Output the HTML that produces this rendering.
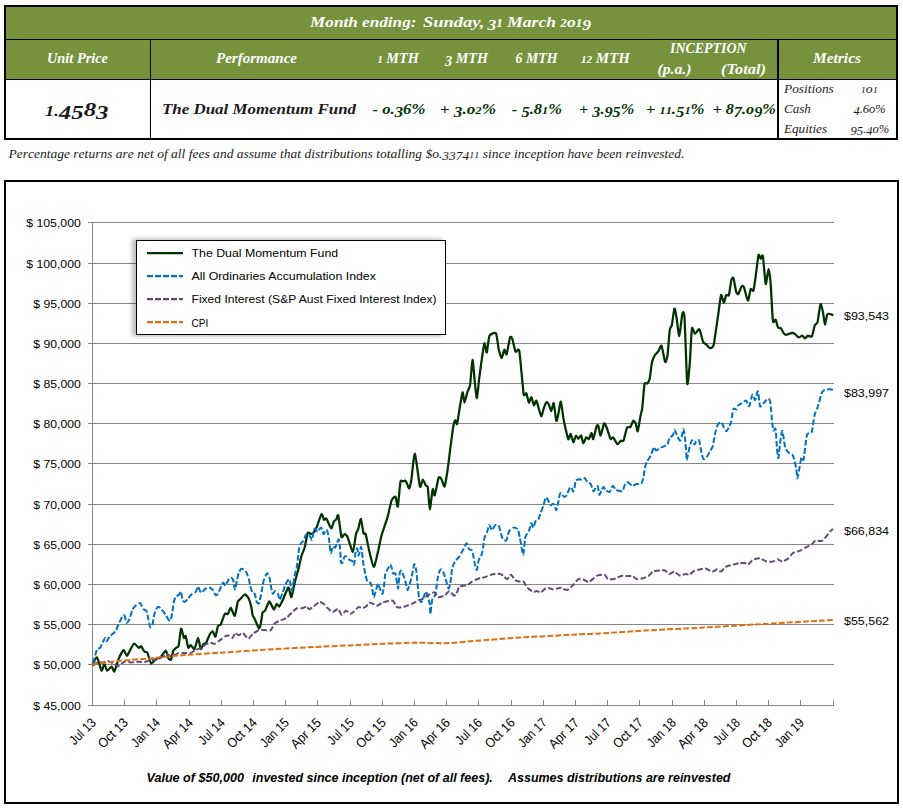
<!DOCTYPE html><html><head><meta charset="utf-8"><title>Fund</title><style>html,body{margin:0;padding:0;background:#fff;width:903px;height:808px;overflow:hidden;position:relative;font-family:"Liberation Sans",sans-serif}</style></head><body><svg width="903" height="808" viewBox="0 0 903 808" style="position:absolute;left:0;top:0">
<rect x="0" y="0" width="903" height="808" fill="#fff"/>
<rect x="4" y="5" width="894" height="135" fill="#000"/>
<rect x="6" y="7" width="890" height="32" fill="#76923c"/>
<rect x="6" y="40" width="144" height="39" fill="#76923c"/>
<rect x="151" y="40" width="626" height="39" fill="#76923c"/>
<rect x="779" y="40" width="117" height="39" fill="#76923c"/>
<rect x="6" y="80" width="144" height="58" fill="#fff"/>
<rect x="151" y="80" width="626" height="58" fill="#fff"/>
<rect x="779" y="80" width="117" height="58" fill="#fff"/>
<text x="310" y="27" font-family="'Liberation Serif', serif" font-size="15.5" font-weight="bold" font-style="italic" fill="#fff" text-anchor="start" textLength="106.5" lengthAdjust="spacingAndGlyphs" >Month ending:</text>
<text x="423" y="27" font-family="'Liberation Serif', serif" font-size="15.5" font-weight="bold" font-style="italic" fill="#fff" text-anchor="start" textLength="61.5" lengthAdjust="spacingAndGlyphs" >Sunday,</text>
<text x="487.5" y="27" font-family="'Liberation Serif', serif" font-size="15.5" font-weight="bold" font-style="italic" fill="#fff" textLength="103.5" lengthAdjust="spacingAndGlyphs" xml:space="preserve"><tspan y="30.1" font-size="15.5">3</tspan><tspan y="27" font-size="11.62">1</tspan><tspan y="27" font-size="15.5"> </tspan><tspan y="27" font-size="15.5">M</tspan><tspan y="27" font-size="15.5">a</tspan><tspan y="27" font-size="15.5">r</tspan><tspan y="27" font-size="15.5">c</tspan><tspan y="27" font-size="15.5">h</tspan><tspan y="27" font-size="15.5"> </tspan><tspan y="27" font-size="11.62">2</tspan><tspan y="27" font-size="15.5">o</tspan><tspan y="27" font-size="11.62">1</tspan><tspan y="30.1" font-size="15.5">9</tspan></text>
<text x="47" y="63" font-family="'Liberation Serif', serif" font-size="14" font-weight="bold" font-style="italic" fill="#fff" text-anchor="start" textLength="61" lengthAdjust="spacingAndGlyphs" >Unit Price</text>
<text x="216" y="63" font-family="'Liberation Serif', serif" font-size="14" font-weight="bold" font-style="italic" fill="#fff" text-anchor="start" textLength="81" lengthAdjust="spacingAndGlyphs" >Performance</text>
<text x="377.5" y="63" font-family="'Liberation Serif', serif" font-size="14" font-weight="bold" font-style="italic" fill="#fff" textLength="41.5" lengthAdjust="spacingAndGlyphs" xml:space="preserve"><tspan y="63" font-size="10.36">1</tspan><tspan y="63" font-size="14"> </tspan><tspan y="63" font-size="14">M</tspan><tspan y="63" font-size="14">T</tspan><tspan y="63" font-size="14">H</tspan></text>
<text x="445" y="63" font-family="'Liberation Serif', serif" font-size="14" font-weight="bold" font-style="italic" fill="#fff" textLength="43" lengthAdjust="spacingAndGlyphs" xml:space="preserve"><tspan y="65.8" font-size="14">3</tspan><tspan y="63" font-size="14"> </tspan><tspan y="63" font-size="14">M</tspan><tspan y="63" font-size="14">T</tspan><tspan y="63" font-size="14">H</tspan></text>
<text x="515.5" y="63" font-family="'Liberation Serif', serif" font-size="14" font-weight="bold" font-style="italic" fill="#fff" textLength="42" lengthAdjust="spacingAndGlyphs" xml:space="preserve"><tspan y="63" font-size="14">6</tspan><tspan y="63" font-size="14"> </tspan><tspan y="63" font-size="14">M</tspan><tspan y="63" font-size="14">T</tspan><tspan y="63" font-size="14">H</tspan></text>
<text x="581" y="63" font-family="'Liberation Serif', serif" font-size="14" font-weight="bold" font-style="italic" fill="#fff" textLength="49" lengthAdjust="spacingAndGlyphs" xml:space="preserve"><tspan y="63" font-size="10.36">1</tspan><tspan y="63" font-size="10.36">2</tspan><tspan y="63" font-size="14"> </tspan><tspan y="63" font-size="14">M</tspan><tspan y="63" font-size="14">T</tspan><tspan y="63" font-size="14">H</tspan></text>
<text x="670" y="53" font-family="'Liberation Serif', serif" font-size="14" font-weight="bold" font-style="italic" fill="#fff" text-anchor="start" textLength="76.5" lengthAdjust="spacingAndGlyphs" >INCEPTION</text>
<text x="657.5" y="74" font-family="'Liberation Serif', serif" font-size="14" font-weight="bold" font-style="italic" fill="#fff" text-anchor="start" textLength="34" lengthAdjust="spacingAndGlyphs" >(p.a.)</text>
<text x="721" y="74" font-family="'Liberation Serif', serif" font-size="14" font-weight="bold" font-style="italic" fill="#fff" text-anchor="start" textLength="45" lengthAdjust="spacingAndGlyphs" >(Total)</text>
<text x="813" y="63" font-family="'Liberation Serif', serif" font-size="14" font-weight="bold" font-style="italic" fill="#fff" text-anchor="start" textLength="48" lengthAdjust="spacingAndGlyphs" >Metrics</text>
<text x="45" y="116" font-family="'Liberation Serif', serif" font-size="19.5" font-weight="bold" font-style="italic" fill="#1a1a1a" textLength="63.5" lengthAdjust="spacingAndGlyphs"><tspan font-size="14.5">1.</tspan><tspan y="119">45</tspan><tspan y="116">8</tspan><tspan y="119">3</tspan></text>
<text x="162" y="114" font-family="'Liberation Serif', serif" font-size="14.5" font-weight="bold" font-style="italic" fill="#1a1a1a" text-anchor="start" textLength="194" lengthAdjust="spacingAndGlyphs" >The Dual Momentum Fund</text>
<text x="372.4" y="113.7" font-family="'Liberation Serif', serif" font-size="14.5" font-weight="bold" font-style="italic" fill="#003300" textLength="53.0" lengthAdjust="spacingAndGlyphs" xml:space="preserve"><tspan y="113.7" font-size="14.5">-</tspan><tspan y="113.7" font-size="14.5"> </tspan><tspan y="113.7" font-size="14.5">o</tspan><tspan y="113.7" font-size="14.5">.</tspan><tspan y="116.6" font-size="14.5">3</tspan><tspan y="113.7" font-size="14.5">6</tspan><tspan y="113.7" font-size="14.5">%</tspan></text>
<text x="439.7" y="113.7" font-family="'Liberation Serif', serif" font-size="14.5" font-weight="bold" font-style="italic" fill="#003300" textLength="56.3" lengthAdjust="spacingAndGlyphs" xml:space="preserve"><tspan y="113.7" font-size="14.5">+</tspan><tspan y="113.7" font-size="14.5"> </tspan><tspan y="116.6" font-size="14.5">3</tspan><tspan y="113.7" font-size="14.5">.</tspan><tspan y="113.7" font-size="14.5">o</tspan><tspan y="113.7" font-size="10.73">2</tspan><tspan y="113.7" font-size="14.5">%</tspan></text>
<text x="511.8" y="113.7" font-family="'Liberation Serif', serif" font-size="14.5" font-weight="bold" font-style="italic" fill="#003300" textLength="50.2" lengthAdjust="spacingAndGlyphs" xml:space="preserve"><tspan y="113.7" font-size="14.5">-</tspan><tspan y="113.7" font-size="14.5"> </tspan><tspan y="116.6" font-size="14.5">5</tspan><tspan y="113.7" font-size="14.5">.</tspan><tspan y="113.7" font-size="14.5">8</tspan><tspan y="113.7" font-size="10.73">1</tspan><tspan y="113.7" font-size="14.5">%</tspan></text>
<text x="579" y="113.7" font-family="'Liberation Serif', serif" font-size="14.5" font-weight="bold" font-style="italic" fill="#003300" textLength="55.2" lengthAdjust="spacingAndGlyphs" xml:space="preserve"><tspan y="113.7" font-size="14.5">+</tspan><tspan y="113.7" font-size="14.5"> </tspan><tspan y="116.6" font-size="14.5">3</tspan><tspan y="113.7" font-size="14.5">.</tspan><tspan y="116.6" font-size="14.5">9</tspan><tspan y="116.6" font-size="14.5">5</tspan><tspan y="113.7" font-size="14.5">%</tspan></text>
<text x="645.7" y="113.7" font-family="'Liberation Serif', serif" font-size="14.5" font-weight="bold" font-style="italic" fill="#003300" textLength="58.9" lengthAdjust="spacingAndGlyphs" xml:space="preserve"><tspan y="113.7" font-size="14.5">+</tspan><tspan y="113.7" font-size="14.5"> </tspan><tspan y="113.7" font-size="10.73">1</tspan><tspan y="113.7" font-size="10.73">1</tspan><tspan y="113.7" font-size="14.5">.</tspan><tspan y="116.6" font-size="14.5">5</tspan><tspan y="113.7" font-size="10.73">1</tspan><tspan y="113.7" font-size="14.5">%</tspan></text>
<text x="712.4" y="113.7" font-family="'Liberation Serif', serif" font-size="14.5" font-weight="bold" font-style="italic" fill="#003300" textLength="63.5" lengthAdjust="spacingAndGlyphs" xml:space="preserve"><tspan y="113.7" font-size="14.5">+</tspan><tspan y="113.7" font-size="14.5"> </tspan><tspan y="113.7" font-size="14.5">8</tspan><tspan y="116.6" font-size="14.5">7</tspan><tspan y="113.7" font-size="14.5">.</tspan><tspan y="113.7" font-size="14.5">o</tspan><tspan y="116.6" font-size="14.5">9</tspan><tspan y="113.7" font-size="14.5">%</tspan></text>
<text x="784" y="92.6" font-family="'Liberation Serif', serif" font-size="12" font-weight="normal" font-style="italic" fill="#1a1a1a" text-anchor="start" textLength="49.8" lengthAdjust="spacingAndGlyphs" >Positions</text>
<text x="860.8" y="92.6" font-family="'Liberation Serif', serif" font-size="12" font-weight="normal" font-style="italic" fill="#1a1a1a" textLength="17" lengthAdjust="spacingAndGlyphs" xml:space="preserve"><tspan y="92.6" font-size="8.88">1</tspan><tspan y="92.6" font-size="12">o</tspan><tspan y="92.6" font-size="8.88">1</tspan></text>
<text x="784" y="112.5" font-family="'Liberation Serif', serif" font-size="12" font-weight="normal" font-style="italic" fill="#1a1a1a" text-anchor="start" textLength="26.8" lengthAdjust="spacingAndGlyphs" >Cash</text>
<text x="853.5" y="112.5" font-family="'Liberation Serif', serif" font-size="12" font-weight="normal" font-style="italic" fill="#1a1a1a" textLength="32.2" lengthAdjust="spacingAndGlyphs" xml:space="preserve"><tspan y="114.9" font-size="12">4</tspan><tspan y="112.5" font-size="12">.</tspan><tspan y="112.5" font-size="12">6</tspan><tspan y="112.5" font-size="12">o</tspan><tspan y="112.5" font-size="12">%</tspan></text>
<text x="784" y="132.7" font-family="'Liberation Serif', serif" font-size="12" font-weight="normal" font-style="italic" fill="#1a1a1a" text-anchor="start" textLength="43" lengthAdjust="spacingAndGlyphs" >Equities</text>
<text x="850.5" y="132.7" font-family="'Liberation Serif', serif" font-size="12" font-weight="normal" font-style="italic" fill="#1a1a1a" textLength="38.8" lengthAdjust="spacingAndGlyphs" xml:space="preserve"><tspan y="135.1" font-size="12">9</tspan><tspan y="135.1" font-size="12">5</tspan><tspan y="132.7" font-size="12">.</tspan><tspan y="135.1" font-size="12">4</tspan><tspan y="132.7" font-size="12">o</tspan><tspan y="132.7" font-size="12">%</tspan></text>
<text x="8.4" y="157.7" font-family="'Liberation Serif', serif" font-size="11.5" font-weight="normal" font-style="italic" fill="#1a1a1a" textLength="676" lengthAdjust="spacingAndGlyphs" xml:space="preserve"><tspan y="157.7" font-size="11.5">P</tspan><tspan y="157.7" font-size="11.5">e</tspan><tspan y="157.7" font-size="11.5">r</tspan><tspan y="157.7" font-size="11.5">c</tspan><tspan y="157.7" font-size="11.5">e</tspan><tspan y="157.7" font-size="11.5">n</tspan><tspan y="157.7" font-size="11.5">t</tspan><tspan y="157.7" font-size="11.5">a</tspan><tspan y="157.7" font-size="11.5">g</tspan><tspan y="157.7" font-size="11.5">e</tspan><tspan y="157.7" font-size="11.5"> </tspan><tspan y="157.7" font-size="11.5">r</tspan><tspan y="157.7" font-size="11.5">e</tspan><tspan y="157.7" font-size="11.5">t</tspan><tspan y="157.7" font-size="11.5">u</tspan><tspan y="157.7" font-size="11.5">r</tspan><tspan y="157.7" font-size="11.5">n</tspan><tspan y="157.7" font-size="11.5">s</tspan><tspan y="157.7" font-size="11.5"> </tspan><tspan y="157.7" font-size="11.5">a</tspan><tspan y="157.7" font-size="11.5">r</tspan><tspan y="157.7" font-size="11.5">e</tspan><tspan y="157.7" font-size="11.5"> </tspan><tspan y="157.7" font-size="11.5">n</tspan><tspan y="157.7" font-size="11.5">e</tspan><tspan y="157.7" font-size="11.5">t</tspan><tspan y="157.7" font-size="11.5"> </tspan><tspan y="157.7" font-size="11.5">o</tspan><tspan y="157.7" font-size="11.5">f</tspan><tspan y="157.7" font-size="11.5"> </tspan><tspan y="157.7" font-size="11.5">a</tspan><tspan y="157.7" font-size="11.5">l</tspan><tspan y="157.7" font-size="11.5">l</tspan><tspan y="157.7" font-size="11.5"> </tspan><tspan y="157.7" font-size="11.5">f</tspan><tspan y="157.7" font-size="11.5">e</tspan><tspan y="157.7" font-size="11.5">e</tspan><tspan y="157.7" font-size="11.5">s</tspan><tspan y="157.7" font-size="11.5"> </tspan><tspan y="157.7" font-size="11.5">a</tspan><tspan y="157.7" font-size="11.5">n</tspan><tspan y="157.7" font-size="11.5">d</tspan><tspan y="157.7" font-size="11.5"> </tspan><tspan y="157.7" font-size="11.5">a</tspan><tspan y="157.7" font-size="11.5">s</tspan><tspan y="157.7" font-size="11.5">s</tspan><tspan y="157.7" font-size="11.5">u</tspan><tspan y="157.7" font-size="11.5">m</tspan><tspan y="157.7" font-size="11.5">e</tspan><tspan y="157.7" font-size="11.5"> </tspan><tspan y="157.7" font-size="11.5">t</tspan><tspan y="157.7" font-size="11.5">h</tspan><tspan y="157.7" font-size="11.5">a</tspan><tspan y="157.7" font-size="11.5">t</tspan><tspan y="157.7" font-size="11.5"> </tspan><tspan y="157.7" font-size="11.5">d</tspan><tspan y="157.7" font-size="11.5">i</tspan><tspan y="157.7" font-size="11.5">s</tspan><tspan y="157.7" font-size="11.5">t</tspan><tspan y="157.7" font-size="11.5">r</tspan><tspan y="157.7" font-size="11.5">i</tspan><tspan y="157.7" font-size="11.5">b</tspan><tspan y="157.7" font-size="11.5">u</tspan><tspan y="157.7" font-size="11.5">t</tspan><tspan y="157.7" font-size="11.5">i</tspan><tspan y="157.7" font-size="11.5">o</tspan><tspan y="157.7" font-size="11.5">n</tspan><tspan y="157.7" font-size="11.5">s</tspan><tspan y="157.7" font-size="11.5"> </tspan><tspan y="157.7" font-size="11.5">t</tspan><tspan y="157.7" font-size="11.5">o</tspan><tspan y="157.7" font-size="11.5">t</tspan><tspan y="157.7" font-size="11.5">a</tspan><tspan y="157.7" font-size="11.5">l</tspan><tspan y="157.7" font-size="11.5">l</tspan><tspan y="157.7" font-size="11.5">i</tspan><tspan y="157.7" font-size="11.5">n</tspan><tspan y="157.7" font-size="11.5">g</tspan><tspan y="157.7" font-size="11.5"> </tspan><tspan y="157.7" font-size="11.5">$</tspan><tspan y="157.7" font-size="11.5">o</tspan><tspan y="157.7" font-size="11.5">.</tspan><tspan y="160.0" font-size="11.5">3</tspan><tspan y="160.0" font-size="11.5">3</tspan><tspan y="160.0" font-size="11.5">7</tspan><tspan y="160.0" font-size="11.5">4</tspan><tspan y="157.7" font-size="8.51">1</tspan><tspan y="157.7" font-size="8.51">1</tspan><tspan y="157.7" font-size="11.5"> </tspan><tspan y="157.7" font-size="11.5">s</tspan><tspan y="157.7" font-size="11.5">i</tspan><tspan y="157.7" font-size="11.5">n</tspan><tspan y="157.7" font-size="11.5">c</tspan><tspan y="157.7" font-size="11.5">e</tspan><tspan y="157.7" font-size="11.5"> </tspan><tspan y="157.7" font-size="11.5">i</tspan><tspan y="157.7" font-size="11.5">n</tspan><tspan y="157.7" font-size="11.5">c</tspan><tspan y="157.7" font-size="11.5">e</tspan><tspan y="157.7" font-size="11.5">p</tspan><tspan y="157.7" font-size="11.5">t</tspan><tspan y="157.7" font-size="11.5">i</tspan><tspan y="157.7" font-size="11.5">o</tspan><tspan y="157.7" font-size="11.5">n</tspan><tspan y="157.7" font-size="11.5"> </tspan><tspan y="157.7" font-size="11.5">h</tspan><tspan y="157.7" font-size="11.5">a</tspan><tspan y="157.7" font-size="11.5">v</tspan><tspan y="157.7" font-size="11.5">e</tspan><tspan y="157.7" font-size="11.5"> </tspan><tspan y="157.7" font-size="11.5">b</tspan><tspan y="157.7" font-size="11.5">e</tspan><tspan y="157.7" font-size="11.5">e</tspan><tspan y="157.7" font-size="11.5">n</tspan><tspan y="157.7" font-size="11.5"> </tspan><tspan y="157.7" font-size="11.5">r</tspan><tspan y="157.7" font-size="11.5">e</tspan><tspan y="157.7" font-size="11.5">i</tspan><tspan y="157.7" font-size="11.5">n</tspan><tspan y="157.7" font-size="11.5">v</tspan><tspan y="157.7" font-size="11.5">e</tspan><tspan y="157.7" font-size="11.5">s</tspan><tspan y="157.7" font-size="11.5">t</tspan><tspan y="157.7" font-size="11.5">e</tspan><tspan y="157.7" font-size="11.5">d</tspan><tspan y="157.7" font-size="11.5">.</tspan></text>
<rect x="4" y="180" width="895" height="624" fill="#000"/>
<rect x="6" y="182" width="891" height="620" fill="#fff"/>
<rect x="92" y="222" width="742" height="1" fill="#868686"/>
<rect x="88" y="222" width="4" height="1" fill="#868686"/>
<text x="80.8" y="226.5" font-family="'Liberation Sans', sans-serif" font-size="11" font-weight="normal" font-style="normal" fill="#000" text-anchor="end" textLength="54.599999999999994" lengthAdjust="spacingAndGlyphs" >$ 105,000</text>
<rect x="92" y="263" width="742" height="1" fill="#868686"/>
<rect x="88" y="263" width="4" height="1" fill="#868686"/>
<text x="80.8" y="267.5" font-family="'Liberation Sans', sans-serif" font-size="11" font-weight="normal" font-style="normal" fill="#000" text-anchor="end" textLength="54.599999999999994" lengthAdjust="spacingAndGlyphs" >$ 100,000</text>
<rect x="92" y="303" width="742" height="1" fill="#868686"/>
<rect x="88" y="303" width="4" height="1" fill="#868686"/>
<text x="80.8" y="307.5" font-family="'Liberation Sans', sans-serif" font-size="11" font-weight="normal" font-style="normal" fill="#000" text-anchor="end" textLength="47.599999999999994" lengthAdjust="spacingAndGlyphs" >$ 95,000</text>
<rect x="92" y="343" width="742" height="1" fill="#868686"/>
<rect x="88" y="343" width="4" height="1" fill="#868686"/>
<text x="80.8" y="347.5" font-family="'Liberation Sans', sans-serif" font-size="11" font-weight="normal" font-style="normal" fill="#000" text-anchor="end" textLength="47.599999999999994" lengthAdjust="spacingAndGlyphs" >$ 90,000</text>
<rect x="92" y="383" width="742" height="1" fill="#868686"/>
<rect x="88" y="383" width="4" height="1" fill="#868686"/>
<text x="80.8" y="387.5" font-family="'Liberation Sans', sans-serif" font-size="11" font-weight="normal" font-style="normal" fill="#000" text-anchor="end" textLength="47.599999999999994" lengthAdjust="spacingAndGlyphs" >$ 85,000</text>
<rect x="92" y="423" width="742" height="1" fill="#868686"/>
<rect x="88" y="423" width="4" height="1" fill="#868686"/>
<text x="80.8" y="427.5" font-family="'Liberation Sans', sans-serif" font-size="11" font-weight="normal" font-style="normal" fill="#000" text-anchor="end" textLength="47.599999999999994" lengthAdjust="spacingAndGlyphs" >$ 80,000</text>
<rect x="92" y="463" width="742" height="1" fill="#868686"/>
<rect x="88" y="463" width="4" height="1" fill="#868686"/>
<text x="80.8" y="467.5" font-family="'Liberation Sans', sans-serif" font-size="11" font-weight="normal" font-style="normal" fill="#000" text-anchor="end" textLength="47.599999999999994" lengthAdjust="spacingAndGlyphs" >$ 75,000</text>
<rect x="92" y="504" width="742" height="1" fill="#868686"/>
<rect x="88" y="504" width="4" height="1" fill="#868686"/>
<text x="80.8" y="508.5" font-family="'Liberation Sans', sans-serif" font-size="11" font-weight="normal" font-style="normal" fill="#000" text-anchor="end" textLength="47.599999999999994" lengthAdjust="spacingAndGlyphs" >$ 70,000</text>
<rect x="92" y="544" width="742" height="1" fill="#868686"/>
<rect x="88" y="544" width="4" height="1" fill="#868686"/>
<text x="80.8" y="548.5" font-family="'Liberation Sans', sans-serif" font-size="11" font-weight="normal" font-style="normal" fill="#000" text-anchor="end" textLength="47.599999999999994" lengthAdjust="spacingAndGlyphs" >$ 65,000</text>
<rect x="92" y="584" width="742" height="1" fill="#868686"/>
<rect x="88" y="584" width="4" height="1" fill="#868686"/>
<text x="80.8" y="588.5" font-family="'Liberation Sans', sans-serif" font-size="11" font-weight="normal" font-style="normal" fill="#000" text-anchor="end" textLength="47.599999999999994" lengthAdjust="spacingAndGlyphs" >$ 60,000</text>
<rect x="92" y="624" width="742" height="1" fill="#868686"/>
<rect x="88" y="624" width="4" height="1" fill="#868686"/>
<text x="80.8" y="628.5" font-family="'Liberation Sans', sans-serif" font-size="11" font-weight="normal" font-style="normal" fill="#000" text-anchor="end" textLength="47.599999999999994" lengthAdjust="spacingAndGlyphs" >$ 55,000</text>
<rect x="92" y="664" width="742" height="1" fill="#868686"/>
<rect x="88" y="664" width="4" height="1" fill="#868686"/>
<text x="80.8" y="668.5" font-family="'Liberation Sans', sans-serif" font-size="11" font-weight="normal" font-style="normal" fill="#000" text-anchor="end" textLength="47.599999999999994" lengthAdjust="spacingAndGlyphs" >$ 50,000</text>
<rect x="88" y="705" width="4" height="1" fill="#868686"/>
<text x="80.8" y="709.5" font-family="'Liberation Sans', sans-serif" font-size="11" font-weight="normal" font-style="normal" fill="#000" text-anchor="end" textLength="47.599999999999994" lengthAdjust="spacingAndGlyphs" >$ 45,000</text>
<rect x="92" y="222" width="1" height="484" fill="#868686"/>
<rect x="88" y="705" width="746" height="1" fill="#868686"/>
<rect x="92" y="700" width="1" height="5" fill="#868686"/>
<text x="96.8" y="723.5" font-family="'Liberation Sans', sans-serif" font-size="13.3" fill="#000" text-anchor="end" textLength="31.46" lengthAdjust="spacingAndGlyphs" transform="rotate(-45 96.8 723.5)">Jul 13</text>
<rect x="124" y="700" width="1" height="5" fill="#868686"/>
<text x="128.8" y="723.5" font-family="'Liberation Sans', sans-serif" font-size="13.3" fill="#000" text-anchor="end" textLength="36.18" lengthAdjust="spacingAndGlyphs" transform="rotate(-45 128.8 723.5)">Oct 13</text>
<rect x="156" y="700" width="1" height="5" fill="#868686"/>
<text x="160.8" y="723.5" font-family="'Liberation Sans', sans-serif" font-size="13.3" fill="#000" text-anchor="end" textLength="34.86" lengthAdjust="spacingAndGlyphs" transform="rotate(-45 160.8 723.5)">Jan 14</text>
<rect x="189" y="700" width="1" height="5" fill="#868686"/>
<text x="193.8" y="723.5" font-family="'Liberation Sans', sans-serif" font-size="13.3" fill="#000" text-anchor="end" textLength="36.62" lengthAdjust="spacingAndGlyphs" transform="rotate(-45 193.8 723.5)">Apr 14</text>
<rect x="221" y="700" width="1" height="5" fill="#868686"/>
<text x="225.8" y="723.5" font-family="'Liberation Sans', sans-serif" font-size="13.3" fill="#000" text-anchor="end" textLength="31.46" lengthAdjust="spacingAndGlyphs" transform="rotate(-45 225.8 723.5)">Jul 14</text>
<rect x="253" y="700" width="1" height="5" fill="#868686"/>
<text x="257.8" y="723.5" font-family="'Liberation Sans', sans-serif" font-size="13.3" fill="#000" text-anchor="end" textLength="36.18" lengthAdjust="spacingAndGlyphs" transform="rotate(-45 257.8 723.5)">Oct 14</text>
<rect x="285" y="700" width="1" height="5" fill="#868686"/>
<text x="289.8" y="723.5" font-family="'Liberation Sans', sans-serif" font-size="13.3" fill="#000" text-anchor="end" textLength="34.86" lengthAdjust="spacingAndGlyphs" transform="rotate(-45 289.8 723.5)">Jan 15</text>
<rect x="317" y="700" width="1" height="5" fill="#868686"/>
<text x="321.8" y="723.5" font-family="'Liberation Sans', sans-serif" font-size="13.3" fill="#000" text-anchor="end" textLength="36.62" lengthAdjust="spacingAndGlyphs" transform="rotate(-45 321.8 723.5)">Apr 15</text>
<rect x="350" y="700" width="1" height="5" fill="#868686"/>
<text x="354.8" y="723.5" font-family="'Liberation Sans', sans-serif" font-size="13.3" fill="#000" text-anchor="end" textLength="31.46" lengthAdjust="spacingAndGlyphs" transform="rotate(-45 354.8 723.5)">Jul 15</text>
<rect x="382" y="700" width="1" height="5" fill="#868686"/>
<text x="386.8" y="723.5" font-family="'Liberation Sans', sans-serif" font-size="13.3" fill="#000" text-anchor="end" textLength="36.18" lengthAdjust="spacingAndGlyphs" transform="rotate(-45 386.8 723.5)">Oct 15</text>
<rect x="414" y="700" width="1" height="5" fill="#868686"/>
<text x="418.8" y="723.5" font-family="'Liberation Sans', sans-serif" font-size="13.3" fill="#000" text-anchor="end" textLength="34.86" lengthAdjust="spacingAndGlyphs" transform="rotate(-45 418.8 723.5)">Jan 16</text>
<rect x="446" y="700" width="1" height="5" fill="#868686"/>
<text x="450.8" y="723.5" font-family="'Liberation Sans', sans-serif" font-size="13.3" fill="#000" text-anchor="end" textLength="36.62" lengthAdjust="spacingAndGlyphs" transform="rotate(-45 450.8 723.5)">Apr 16</text>
<rect x="478" y="700" width="1" height="5" fill="#868686"/>
<text x="482.8" y="723.5" font-family="'Liberation Sans', sans-serif" font-size="13.3" fill="#000" text-anchor="end" textLength="31.46" lengthAdjust="spacingAndGlyphs" transform="rotate(-45 482.8 723.5)">Jul 16</text>
<rect x="511" y="700" width="1" height="5" fill="#868686"/>
<text x="515.8" y="723.5" font-family="'Liberation Sans', sans-serif" font-size="13.3" fill="#000" text-anchor="end" textLength="36.18" lengthAdjust="spacingAndGlyphs" transform="rotate(-45 515.8 723.5)">Oct 16</text>
<rect x="543" y="700" width="1" height="5" fill="#868686"/>
<text x="547.8" y="723.5" font-family="'Liberation Sans', sans-serif" font-size="13.3" fill="#000" text-anchor="end" textLength="34.86" lengthAdjust="spacingAndGlyphs" transform="rotate(-45 547.8 723.5)">Jan 17</text>
<rect x="575" y="700" width="1" height="5" fill="#868686"/>
<text x="579.8" y="723.5" font-family="'Liberation Sans', sans-serif" font-size="13.3" fill="#000" text-anchor="end" textLength="36.62" lengthAdjust="spacingAndGlyphs" transform="rotate(-45 579.8 723.5)">Apr 17</text>
<rect x="607" y="700" width="1" height="5" fill="#868686"/>
<text x="611.8" y="723.5" font-family="'Liberation Sans', sans-serif" font-size="13.3" fill="#000" text-anchor="end" textLength="31.46" lengthAdjust="spacingAndGlyphs" transform="rotate(-45 611.8 723.5)">Jul 17</text>
<rect x="639" y="700" width="1" height="5" fill="#868686"/>
<text x="643.8" y="723.5" font-family="'Liberation Sans', sans-serif" font-size="13.3" fill="#000" text-anchor="end" textLength="36.18" lengthAdjust="spacingAndGlyphs" transform="rotate(-45 643.8 723.5)">Oct 17</text>
<rect x="672" y="700" width="1" height="5" fill="#868686"/>
<text x="676.8" y="723.5" font-family="'Liberation Sans', sans-serif" font-size="13.3" fill="#000" text-anchor="end" textLength="34.86" lengthAdjust="spacingAndGlyphs" transform="rotate(-45 676.8 723.5)">Jan 18</text>
<rect x="704" y="700" width="1" height="5" fill="#868686"/>
<text x="708.8" y="723.5" font-family="'Liberation Sans', sans-serif" font-size="13.3" fill="#000" text-anchor="end" textLength="36.62" lengthAdjust="spacingAndGlyphs" transform="rotate(-45 708.8 723.5)">Apr 18</text>
<rect x="736" y="700" width="1" height="5" fill="#868686"/>
<text x="740.8" y="723.5" font-family="'Liberation Sans', sans-serif" font-size="13.3" fill="#000" text-anchor="end" textLength="31.46" lengthAdjust="spacingAndGlyphs" transform="rotate(-45 740.8 723.5)">Jul 18</text>
<rect x="768" y="700" width="1" height="5" fill="#868686"/>
<text x="772.8" y="723.5" font-family="'Liberation Sans', sans-serif" font-size="13.3" fill="#000" text-anchor="end" textLength="36.18" lengthAdjust="spacingAndGlyphs" transform="rotate(-45 772.8 723.5)">Oct 18</text>
<rect x="800" y="700" width="1" height="5" fill="#868686"/>
<text x="804.8" y="723.5" font-family="'Liberation Sans', sans-serif" font-size="13.3" fill="#000" text-anchor="end" textLength="34.86" lengthAdjust="spacingAndGlyphs" transform="rotate(-45 804.8 723.5)">Jan 19</text>
<rect x="833" y="700" width="1" height="5" fill="#868686"/>
<path d="M92.7,664.0 C93.1,663.3 96.1,656.7 97.0,657.4 C97.9,658.1 100.9,669.9 101.6,670.6 C102.3,671.3 103.8,664.0 104.3,664.0 C104.8,664.0 106.4,670.3 107.1,670.6 C107.8,670.9 111.0,666.6 111.7,666.7 C112.4,666.8 113.7,672.2 114.4,671.4 C115.1,670.6 117.8,660.7 118.7,658.6 C119.6,656.5 122.9,650.4 123.7,650.1 C124.5,649.8 126.2,655.9 126.8,655.9 C127.4,655.9 129.4,651.3 130.1,650.1 C130.8,648.9 133.3,643.7 134.2,643.5 C135.1,643.3 138.1,647.5 138.8,647.8 C139.5,648.1 140.6,645.8 141.2,646.2 C141.8,646.6 143.7,650.9 144.3,651.6 C144.9,652.3 146.7,651.6 147.4,652.8 C148.1,654.0 150.3,663.1 151.2,663.6 C152.1,664.1 155.8,658.8 156.7,658.2 C157.6,657.6 159.1,658.5 160.0,657.8 C160.9,657.0 165.0,650.7 165.8,650.7 C166.6,650.8 167.9,657.4 168.4,658.3 C168.9,659.2 170.6,660.4 171.1,659.6 C171.6,658.8 172.8,651.9 173.3,650.7 C173.8,649.5 175.9,648.1 176.4,647.6 C176.9,647.1 178.1,647.8 178.6,645.9 C179.1,644.0 180.6,629.4 181.1,628.6 C181.6,627.8 183.4,637.1 183.9,637.9 C184.4,638.6 185.3,635.1 185.7,636.1 C186.1,637.1 187.8,646.7 188.3,647.6 C188.8,648.5 190.0,644.9 190.6,645.0 C191.2,645.1 193.8,649.7 194.5,649.0 C195.2,648.3 197.5,637.9 198.1,637.9 C198.7,637.9 200.2,648.4 200.7,649.0 C201.2,649.6 202.9,644.7 203.4,644.1 C203.9,643.5 205.5,643.7 206.1,642.8 C206.7,641.9 208.9,635.9 209.6,634.8 C210.3,633.6 212.1,631.1 212.7,631.3 C213.3,631.5 214.9,637.1 215.4,636.6 C215.9,636.1 217.5,627.1 218.0,625.9 C218.5,624.7 220.0,625.8 220.7,624.6 C221.4,623.4 224.0,615.1 224.7,614.0 C225.4,612.9 227.3,614.5 227.9,613.9 C228.5,613.3 230.1,607.7 230.8,607.9 C231.5,608.1 234.1,616.4 234.8,615.8 C235.5,615.2 237.1,603.8 237.7,602.1 C238.2,600.4 239.6,599.8 240.3,599.0 C241.0,598.2 243.9,594.6 244.7,594.5 C245.5,594.4 247.6,596.4 248.3,597.7 C249.0,599.0 251.0,605.6 251.4,607.4 C251.8,609.2 252.3,614.2 252.7,615.4 C253.0,616.6 254.3,618.1 254.9,619.4 C255.5,620.7 258.3,627.7 258.9,628.2 C259.5,628.7 260.3,625.8 260.7,624.2 C261.1,622.7 262.1,614.1 262.5,612.7 C262.9,611.3 264.4,611.6 265.1,610.5 C265.8,609.4 268.5,602.2 269.1,601.6 C269.7,601.0 270.8,603.9 271.3,604.7 C271.8,605.5 273.5,609.7 274.0,609.6 C274.5,609.5 276.1,604.2 276.6,603.9 C277.1,603.6 278.7,606.9 279.3,606.5 C279.9,606.1 282.4,600.9 283.0,599.7 C283.6,598.5 284.4,595.7 285.0,594.5 C285.6,593.3 287.9,587.2 288.5,587.5 C289.1,587.8 290.8,596.9 291.2,597.2 C291.6,597.6 292.5,592.5 292.9,591.0 C293.3,589.5 294.3,584.2 294.9,582.0 C295.4,579.8 297.7,571.7 298.4,569.1 C299.1,566.5 300.9,557.9 301.5,555.8 C302.1,553.7 304.0,550.1 304.6,547.8 C305.2,545.5 307.1,534.6 307.7,533.2 C308.3,531.8 310.3,533.7 310.8,533.7 C311.3,533.8 312.0,534.3 312.6,533.7 C313.2,533.1 315.7,529.5 316.6,527.5 C317.5,525.5 320.6,515.0 321.4,514.2 C322.1,513.4 323.6,519.5 324.1,519.9 C324.6,520.3 325.6,517.8 326.3,518.6 C327.0,519.4 330.4,528.0 331.2,528.3 C331.9,528.6 333.3,522.6 333.8,521.7 C334.3,520.8 335.7,520.1 336.1,519.5 C336.6,518.9 337.8,513.8 338.3,515.5 C338.8,517.2 340.8,534.9 341.4,536.8 C342.0,538.7 343.9,534.1 344.5,534.1 C345.1,534.1 346.8,535.4 347.6,537.2 C348.4,539.0 352.1,552.1 352.9,551.8 C353.7,551.5 355.5,536.4 356.0,534.1 C356.5,531.8 357.7,530.7 358.2,529.2 C358.7,527.7 360.4,518.6 360.9,519.0 C361.4,519.4 363.0,531.7 363.5,533.2 C364.0,534.7 365.2,532.5 365.7,534.1 C366.2,535.7 368.0,545.7 368.8,549.0 C369.6,552.3 372.8,566.4 373.7,566.8 C374.6,567.2 376.9,556.2 377.7,553.0 C378.5,549.8 380.6,538.8 381.6,535.2 C382.6,531.6 386.5,520.9 387.5,517.4 C388.5,513.9 390.7,502.7 391.5,500.6 C392.3,498.5 394.9,496.1 395.5,496.7 C396.1,497.3 397.3,508.1 397.8,506.6 C398.3,505.1 399.9,484.4 400.4,481.9 C400.9,479.4 402.5,481.6 403.0,481.5 C403.5,481.4 404.7,480.4 405.1,480.6 C405.5,480.8 406.6,482.7 407.0,483.5 C407.4,484.3 408.8,488.8 409.2,488.4 C409.6,488.0 410.7,483.5 411.3,480.0 C411.9,476.5 414.0,453.2 414.9,453.8 C415.8,454.4 419.1,483.8 419.9,486.4 C420.7,489.0 422.2,479.6 422.8,479.5 C423.4,479.4 425.3,484.7 425.8,485.5 C426.3,486.3 427.4,485.0 427.8,487.4 C428.2,489.8 429.3,509.0 429.8,509.2 C430.3,509.4 432.2,490.8 432.7,489.4 C433.2,488.0 434.1,496.5 434.7,495.3 C435.3,494.1 438.0,479.1 438.7,477.5 C439.4,475.9 441.0,478.6 441.6,479.5 C442.2,480.4 444.0,487.5 444.6,486.4 C445.2,485.3 447.2,472.5 447.8,468.5 C448.4,464.5 450.0,450.5 450.6,446.2 C451.2,441.9 452.9,428.4 453.4,425.8 C453.9,423.2 454.8,420.4 455.2,420.2 C455.6,420.0 456.6,425.2 457.1,423.9 C457.6,422.6 459.2,410.3 459.8,407.2 C460.4,404.1 462.1,392.9 462.6,392.4 C463.1,391.9 464.0,402.6 464.5,402.6 C465.0,402.6 466.7,394.2 467.3,392.4 C467.9,390.6 469.6,388.2 470.1,385.0 C470.6,381.8 472.0,360.3 472.5,359.9 C473.0,359.5 474.3,377.5 474.7,381.3 C475.1,385.1 476.4,398.4 476.9,398.0 C477.4,397.6 478.8,381.6 479.3,377.5 C479.8,373.4 481.6,360.5 482.1,357.1 C482.6,353.7 483.9,343.7 484.4,343.2 C484.9,342.7 486.3,353.2 486.8,352.5 C487.3,351.8 488.6,337.7 489.5,335.8 C490.4,333.9 495.1,332.0 496.0,333.4 C496.9,334.8 498.2,347.2 498.8,349.7 C499.4,352.2 501.0,358.1 501.6,358.1 C502.2,358.1 503.9,350.1 504.4,349.7 C504.9,349.3 506.0,355.5 506.6,354.3 C507.2,353.1 509.4,339.2 510.0,337.6 C510.6,336.0 511.7,337.2 512.2,338.6 C512.8,340.0 514.8,350.4 515.5,351.6 C516.2,352.8 518.5,347.5 519.2,350.6 C519.9,353.7 522.0,378.4 522.5,382.9 C523.0,387.4 523.4,394.2 523.8,395.2 C524.2,396.2 525.9,392.6 526.4,393.3 C526.9,394.1 528.4,402.3 528.9,402.7 C529.4,403.1 530.9,397.0 531.4,397.2 C531.9,397.4 533.4,404.8 533.9,405.1 C534.4,405.5 535.8,400.3 536.3,400.7 C536.8,401.1 538.3,407.0 538.8,408.6 C539.3,410.2 540.8,416.6 541.3,416.5 C541.8,416.4 543.3,409.5 543.8,408.1 C544.3,406.7 546.0,402.6 546.5,402.2 C547.0,401.8 548.2,403.3 548.7,404.2 C549.2,405.1 550.7,411.2 551.2,411.1 C551.7,411.0 553.2,402.2 553.7,403.2 C554.2,404.2 555.9,420.1 556.4,421.0 C556.9,421.9 558.2,414.5 558.6,412.6 C559.0,410.7 560.3,401.0 560.8,401.7 C561.3,402.4 563.1,416.6 563.6,419.5 C564.1,422.4 565.5,428.4 566.0,430.4 C566.5,432.4 567.8,438.9 568.3,439.3 C568.8,439.7 570.2,433.6 570.7,433.9 C571.2,434.2 572.8,442.1 573.3,442.3 C573.8,442.5 575.4,436.2 575.9,435.8 C576.4,435.4 577.9,438.8 578.4,438.8 C578.9,438.8 580.6,435.1 581.1,435.5 C581.6,435.9 582.8,443.1 583.3,443.3 C583.8,443.5 585.7,437.7 586.3,437.3 C586.9,436.9 588.4,439.4 588.9,439.0 C589.4,438.6 591.1,432.9 591.5,432.9 C591.9,432.9 592.7,439.7 593.2,439.0 C593.7,438.3 596.2,427.3 596.7,426.0 C597.2,424.7 598.0,425.1 598.4,426.0 C598.8,426.9 600.0,435.8 600.6,435.5 C601.2,435.2 603.5,424.1 604.1,423.4 C604.8,422.7 606.5,427.0 607.1,428.6 C607.7,430.2 609.9,438.1 610.5,439.0 C611.1,439.9 612.4,436.8 613.1,437.3 C613.8,437.8 616.7,443.9 617.5,444.2 C618.3,444.5 620.3,441.1 620.9,440.7 C621.5,440.3 622.9,442.0 623.5,440.7 C624.1,439.4 626.3,429.1 627.0,427.7 C627.7,426.3 629.9,427.6 630.5,426.9 C631.1,426.2 632.6,421.2 633.1,420.8 C633.6,420.4 635.2,422.4 635.7,423.4 C636.2,424.4 637.2,432.1 637.7,431.2 C638.2,430.2 640.4,416.1 640.9,413.9 C641.4,411.6 641.8,411.7 642.2,408.7 C642.6,405.7 644.0,386.7 644.5,384.2 C645.0,381.7 646.9,384.0 647.4,383.5 C647.9,383.0 649.1,381.2 649.6,379.1 C650.1,377.0 651.4,365.1 651.9,362.7 C652.4,360.3 654.1,356.5 654.8,355.3 C655.5,354.1 657.9,351.9 658.6,350.9 C659.3,349.9 660.8,344.6 661.5,345.7 C662.2,346.8 664.6,361.0 665.2,362.0 C665.8,363.0 667.0,358.5 667.5,355.3 C668.0,352.1 669.3,333.1 669.7,330.1 C670.1,327.1 671.4,327.0 671.9,324.9 C672.4,322.8 673.9,309.4 674.4,308.6 C674.9,307.8 675.9,314.0 676.4,316.7 C676.9,319.4 678.7,336.3 679.3,336.0 C679.9,335.7 681.8,315.6 682.3,313.7 C682.8,311.8 684.0,310.5 684.5,317.5 C685.0,324.5 686.7,378.8 687.2,383.5 C687.7,388.2 689.2,369.7 689.7,364.2 C690.2,358.7 691.4,331.6 691.9,328.6 C692.4,325.6 694.1,333.7 694.9,333.8 C695.6,333.9 698.6,328.5 699.4,329.3 C700.2,330.1 702.4,340.5 703.1,342.0 C703.8,343.5 705.3,343.6 706.0,344.2 C706.7,344.8 709.0,348.1 709.8,348.2 C710.5,348.3 712.8,347.8 713.5,345.7 C714.2,343.6 715.9,330.3 716.4,327.1 C716.9,323.9 717.8,317.3 718.3,314.1 C718.8,310.9 720.5,296.2 721.1,295.1 C721.7,294.0 723.4,302.9 723.9,302.9 C724.4,302.9 725.6,295.9 726.1,295.1 C726.6,294.3 728.4,296.5 728.9,295.1 C729.4,293.7 730.8,282.4 731.2,280.7 C731.7,279.0 732.9,276.8 733.4,277.9 C733.9,279.0 735.7,290.2 736.2,291.8 C736.7,293.4 737.9,294.6 738.4,294.0 C738.9,293.4 741.1,286.9 741.7,286.2 C742.3,285.5 743.4,285.9 744.0,287.3 C744.6,288.8 747.2,300.5 747.9,300.7 C748.6,300.9 750.2,290.0 750.7,289.0 C751.2,288.0 752.9,292.0 753.4,290.7 C753.9,289.4 755.2,279.8 755.7,276.2 C756.2,272.6 758.0,256.7 758.5,255.0 C759.0,253.3 760.3,258.8 760.7,258.9 C761.1,259.0 762.4,253.6 762.9,256.1 C763.4,258.6 765.1,282.7 765.7,284.0 C766.3,285.3 768.0,269.0 768.5,269.0 C769.0,269.0 770.3,278.8 770.7,284.0 C771.1,289.2 772.4,317.2 772.9,320.8 C773.4,324.4 775.2,319.0 775.7,319.7 C776.2,320.4 777.5,326.7 778.0,327.5 C778.5,328.3 780.1,327.4 780.7,328.0 C781.3,328.6 783.2,332.4 783.7,333.1 C784.2,333.8 785.4,334.8 785.9,334.9 C786.4,335.0 788.2,334.0 788.9,333.8 C789.6,333.6 791.9,332.8 792.6,332.9 C793.3,333.0 795.0,334.0 795.6,334.5 C796.2,335.0 797.9,337.4 798.6,337.5 C799.3,337.6 801.6,335.6 802.3,335.7 C803.0,335.8 804.7,338.3 805.2,338.3 C805.8,338.3 807.1,335.9 807.8,335.7 C808.5,335.5 811.2,337.5 811.9,336.4 C812.6,335.3 814.3,326.3 814.9,324.9 C815.5,323.5 816.9,324.4 817.5,322.3 C818.1,320.2 819.9,305.0 820.5,304.1 C821.1,303.2 822.7,311.0 823.1,313.0 C823.5,315.0 824.5,324.4 824.9,324.5 C825.3,324.6 826.6,315.0 827.5,314.1 C828.4,313.2 832.9,315.1 833.5,315.2" fill="none" stroke="#003300" stroke-width="2.25" stroke-linejoin="round" stroke-linecap="butt"/>
<path d="M93.1,663.3 C93.3,662.4 95.0,656.1 95.4,654.7 C95.8,653.3 96.7,649.7 97.2,649.0 C97.7,648.3 99.4,648.7 100.0,648.0 C100.6,647.3 102.3,643.3 102.8,642.3 C103.3,641.3 104.6,638.0 105.0,637.9 C105.4,637.8 106.2,641.3 106.7,641.2 C107.2,641.1 108.6,637.8 109.5,636.8 C110.4,635.8 114.7,632.4 115.6,631.2 C116.5,630.0 117.7,626.0 118.4,624.5 C119.1,623.0 121.7,617.6 122.3,616.7 C122.9,615.8 124.1,615.0 124.5,615.6 C124.9,616.2 126.2,622.6 126.7,622.9 C127.2,623.2 128.9,620.3 129.5,619.0 C130.1,617.7 131.7,611.3 132.3,610.0 C132.9,608.7 134.9,606.3 135.7,605.6 C136.5,604.9 139.3,602.8 140.1,603.1 C140.9,603.5 142.8,608.3 143.5,609.1 C144.2,609.9 146.1,610.3 146.6,611.3 C147.1,612.3 148.0,617.7 148.4,619.3 C148.8,620.9 149.8,626.8 150.2,627.3 C150.6,627.8 152.0,625.8 152.4,624.6 C152.8,623.4 153.8,616.5 154.2,614.9 C154.6,613.3 156.3,609.0 156.8,608.2 C157.3,607.4 158.5,606.8 159.0,606.9 C159.5,607.0 161.0,608.7 161.7,609.5 C162.4,610.3 165.0,613.9 165.7,614.9 C166.4,615.9 167.8,618.7 168.3,619.3 C168.8,619.9 170.2,621.3 170.6,620.6 C171.0,619.9 172.0,614.2 172.3,612.2 C172.7,610.2 173.7,602.3 174.1,600.7 C174.5,599.1 175.8,596.9 176.3,596.3 C176.8,595.7 178.5,595.4 179.0,594.9 C179.5,594.4 180.6,590.9 180.9,591.4 C181.2,591.9 182.2,598.3 182.5,599.4 C182.8,600.5 183.8,602.0 184.3,602.0 C184.8,602.0 187.1,599.6 187.8,598.9 C188.5,598.1 190.6,595.2 191.4,594.5 C192.2,593.8 195.1,592.6 195.8,591.8 C196.5,591.0 197.5,586.4 198.0,586.5 C198.5,586.6 200.3,592.5 201.1,592.7 C201.8,592.9 204.7,589.2 205.5,588.7 C206.3,588.2 208.4,587.3 209.1,587.4 C209.8,587.5 211.9,588.8 212.6,589.6 C213.3,590.4 215.1,595.1 215.7,595.4 C216.3,595.7 217.9,593.7 218.5,592.8 C219.1,591.9 220.7,587.1 221.2,586.1 C221.7,585.1 223.0,582.6 223.4,582.6 C223.8,582.6 225.1,586.0 225.6,585.7 C226.1,585.4 227.8,580.7 228.3,579.9 C228.8,579.1 230.4,577.7 230.9,577.7 C231.4,577.7 232.8,578.7 233.2,579.9 C233.6,581.1 234.5,589.7 234.9,589.7 C235.3,589.7 236.7,581.2 237.1,579.5 C237.5,577.8 238.5,573.5 238.9,572.4 C239.3,571.3 240.7,569.2 241.1,568.9 C241.5,568.6 242.8,569.0 243.3,569.3 C243.8,569.6 245.5,570.6 246.0,571.5 C246.5,572.4 248.3,577.1 248.7,578.6 C249.1,580.1 250.1,585.2 250.4,586.6 C250.8,588.0 251.8,591.5 252.2,592.3 C252.6,593.0 254.5,593.2 254.9,594.1 C255.3,595.0 256.2,600.7 256.6,601.6 C257.0,602.5 258.4,604.1 258.8,603.4 C259.2,602.7 260.7,596.6 261.1,594.5 C261.6,592.4 262.9,584.0 263.3,582.1 C263.7,580.2 265.1,576.8 265.5,575.9 C265.9,575.0 266.9,573.1 267.3,573.3 C267.7,573.5 269.1,576.3 269.5,577.7 C269.9,579.1 270.9,585.9 271.2,587.5 C271.5,589.1 272.2,593.4 272.6,593.7 C273.0,594.1 274.7,591.0 275.2,591.0 C275.7,591.0 277.4,592.8 277.9,593.7 C278.3,594.6 279.3,599.9 279.7,599.9 C280.1,599.9 281.7,595.3 282.3,593.7 C282.9,592.1 285.2,585.0 285.9,583.5 C286.6,582.0 288.5,578.9 289.0,579.0 C289.5,579.1 290.4,583.7 290.7,584.8 C291.0,585.9 291.7,591.2 292.1,590.1 C292.5,589.0 294.4,576.2 294.9,574.0 C295.3,571.8 296.3,569.8 296.6,568.2 C296.9,566.6 297.7,559.6 298.0,557.6 C298.3,555.6 298.9,549.3 299.3,547.8 C299.7,546.3 301.1,543.2 301.5,542.5 C301.9,541.8 303.3,541.4 303.7,540.7 C304.1,540.0 305.1,536.1 305.5,535.4 C305.9,534.7 306.9,533.7 307.3,533.7 C307.7,533.7 309.0,534.8 309.5,535.4 C310.0,536.0 311.7,540.5 312.1,539.9 C312.5,539.3 313.5,530.8 313.9,529.7 C314.3,528.6 315.3,528.6 315.7,528.8 C316.1,529.0 317.0,532.0 317.5,531.9 C318.0,531.8 320.4,527.3 321.0,527.5 C321.6,527.7 323.3,533.8 323.7,534.1 C324.1,534.4 325.0,530.5 325.4,530.1 C325.8,529.8 326.8,529.7 327.2,530.6 C327.6,531.5 328.6,536.8 329.0,539.0 C329.4,541.2 330.3,552.4 330.7,553.1 C331.1,553.8 332.6,546.6 333.0,546.1 C333.4,545.6 334.8,548.1 335.2,547.8 C335.6,547.5 336.5,544.2 336.9,543.4 C337.2,542.6 338.4,539.0 338.7,539.4 C339.0,539.8 339.8,544.6 340.0,546.9 C340.2,549.2 340.7,560.4 340.9,562.0 C341.1,563.6 341.9,563.4 342.3,562.9 C342.7,562.4 344.1,557.3 344.5,556.7 C344.9,556.1 346.2,556.4 346.7,556.7 C347.2,557.0 348.7,559.4 349.3,559.8 C349.9,560.2 351.9,560.6 352.4,561.1 C352.9,561.6 353.9,565.6 354.2,564.7 C354.5,563.8 355.2,553.9 355.5,552.3 C355.8,550.7 357.0,547.9 357.3,548.3 C357.6,548.6 358.2,555.9 358.6,555.8 C359.0,555.7 360.6,547.3 360.9,546.9 C361.2,546.5 361.8,550.4 362.0,552.0 C362.2,553.6 362.9,560.3 363.2,562.5 C363.5,564.7 364.8,571.9 365.2,573.8 C365.6,575.6 366.8,580.2 367.2,581.0 C367.6,581.8 369.2,581.3 369.7,581.8 C370.1,582.3 371.3,584.4 371.7,585.9 C372.1,587.4 373.3,596.7 373.7,597.1 C374.1,597.5 375.7,591.2 376.1,589.9 C376.5,588.6 377.7,583.9 378.1,583.8 C378.5,583.7 379.7,588.1 380.1,589.1 C380.5,590.1 382.1,594.3 382.5,593.9 C382.9,593.5 383.8,587.1 384.1,585.1 C384.4,583.1 384.9,575.4 385.3,573.8 C385.7,572.2 387.3,569.9 387.8,569.0 C388.3,568.1 389.8,564.6 390.2,564.5 C390.6,564.4 391.5,567.3 391.8,568.2 C392.1,569.1 392.6,572.8 393.0,573.4 C393.4,574.0 395.0,572.6 395.4,573.8 C395.8,575.0 397.1,583.6 397.4,585.1 C397.7,586.6 398.0,589.3 398.2,588.3 C398.4,587.3 399.2,577.2 399.4,575.4 C399.6,573.6 400.3,570.9 400.6,570.6 C400.9,570.3 401.8,571.2 402.2,572.2 C402.6,573.2 404.6,578.4 405.1,580.2 C405.6,582.0 407.0,589.6 407.5,589.9 C408.0,590.2 409.4,585.0 409.9,583.4 C410.4,581.8 411.9,575.7 412.3,573.8 C412.7,571.9 413.9,564.4 414.3,564.1 C414.7,563.8 416.0,568.7 416.3,570.6 C416.6,572.5 417.2,580.6 417.5,583.4 C417.8,586.2 418.9,597.1 419.1,598.7 C419.3,600.3 419.7,599.4 419.9,599.7 C420.1,600.1 421.0,602.5 421.4,602.2 C421.8,602.0 423.2,598.2 423.6,597.2 C424.0,596.2 425.3,591.8 425.7,591.7 C426.1,591.6 427.5,595.3 427.9,596.6 C428.3,597.9 429.6,603.0 429.8,604.7 C430.1,606.4 430.2,613.7 430.4,613.9 C430.5,614.1 431.1,608.5 431.3,607.1 C431.5,605.7 431.9,600.8 432.2,599.7 C432.5,598.6 434.3,596.7 434.7,596.0 C435.1,595.3 435.6,593.8 435.9,592.3 C436.1,590.8 436.9,583.1 437.2,581.1 C437.5,579.1 438.6,573.7 439.0,572.5 C439.4,571.3 440.8,569.2 441.2,569.2 C441.6,569.2 443.0,571.7 443.4,572.5 C443.8,573.3 444.5,575.3 445.0,576.9 C445.5,578.5 448.0,587.9 448.5,588.5 C449.0,589.1 449.9,585.1 450.3,583.1 C450.7,581.1 451.7,571.1 452.1,569.0 C452.5,566.9 454.0,563.1 454.7,561.9 C455.4,560.7 458.4,557.8 459.2,556.6 C460.0,555.5 461.9,551.7 462.7,550.4 C463.4,549.1 466.1,543.4 466.7,543.3 C467.3,543.2 468.4,548.3 468.9,549.0 C469.4,549.7 471.6,549.7 472.0,550.4 C472.4,551.1 473.0,554.2 473.3,555.7 C473.6,557.2 474.7,564.0 475.1,565.4 C475.5,566.8 476.5,570.4 476.9,569.9 C477.3,569.4 478.3,561.5 478.7,560.1 C479.1,558.7 480.9,556.9 481.3,555.7 C481.7,554.5 482.8,549.5 483.1,547.7 C483.4,545.9 484.0,539.6 484.4,538.0 C484.8,536.4 486.6,533.1 487.1,531.8 C487.6,530.5 488.8,525.2 489.3,525.0 C489.8,524.8 491.3,530.2 491.9,530.2 C492.5,530.2 494.6,525.4 495.3,525.0 C496.0,524.6 498.1,524.6 498.8,525.9 C499.5,527.2 501.6,536.5 502.3,538.0 C503.0,539.5 505.5,540.9 506.1,540.6 C506.7,540.3 507.6,536.2 507.9,535.3 C508.2,534.3 508.6,531.9 509.2,531.1 C509.8,530.3 512.7,527.8 513.5,527.6 C514.3,527.4 517.0,528.0 517.6,529.0 C518.2,530.0 519.3,535.0 519.8,537.1 C520.2,539.2 521.7,548.7 522.1,550.4 C522.5,552.1 523.1,555.7 523.4,554.4 C523.7,553.1 524.8,539.6 525.3,537.3 C525.8,535.0 528.3,532.5 528.9,531.1 C529.5,529.7 530.7,523.5 531.1,523.1 C531.5,522.8 532.9,527.8 533.3,527.6 C533.7,527.4 535.0,522.2 535.5,521.4 C536.0,520.6 537.7,520.5 538.2,519.6 C538.7,518.7 540.3,513.9 540.8,512.5 C541.3,511.1 543.0,506.9 543.5,505.4 C544.0,503.9 545.2,498.0 545.7,497.5 C546.2,497.0 547.8,499.8 548.3,500.6 C548.8,501.4 550.1,505.1 550.6,505.4 C551.1,505.7 552.4,503.7 552.8,503.7 C553.2,503.7 554.6,504.7 555.0,505.4 C555.4,506.1 556.0,510.6 556.3,510.3 C556.6,510.0 557.7,504.4 558.1,502.8 C558.5,501.2 559.5,494.8 559.9,493.9 C560.2,493.0 561.2,493.2 561.6,493.5 C562.0,493.8 563.8,496.9 564.3,497.0 C564.8,497.1 566.4,495.7 566.9,494.8 C567.4,493.9 569.1,488.9 569.6,488.2 C570.1,487.4 571.0,486.9 571.4,487.3 C571.8,487.7 572.8,491.7 573.1,491.7 C573.4,491.7 574.2,488.8 574.5,487.7 C574.8,486.6 575.3,481.4 575.8,480.6 C576.3,479.8 578.7,479.4 579.3,479.3 C579.9,479.2 581.5,479.8 582.0,479.7 C582.5,479.6 584.2,477.8 584.7,478.0 C585.2,478.2 586.7,481.4 587.3,482.0 C587.9,482.6 590.3,483.3 590.9,484.2 C591.5,485.1 593.0,491.0 593.5,491.3 C594.0,491.6 595.8,487.3 596.2,486.8 C596.6,486.3 597.6,485.6 597.9,486.4 C598.2,487.2 598.9,494.4 599.3,494.8 C599.7,495.2 601.2,491.0 601.6,490.2 C602.0,489.4 603.0,486.7 603.4,486.7 C603.8,486.7 605.0,489.7 605.6,490.2 C606.2,490.7 608.9,492.4 609.6,492.0 C610.3,491.6 612.1,486.1 612.7,485.8 C613.3,485.5 614.8,488.8 615.4,489.3 C616.0,489.8 617.8,490.5 618.5,490.7 C619.2,490.9 621.8,491.8 622.5,491.1 C623.2,490.4 624.6,484.9 625.1,484.0 C625.6,483.1 627.1,482.1 627.8,482.3 C628.5,482.5 631.3,485.6 632.2,485.8 C633.1,486.0 635.7,484.2 636.6,484.0 C637.5,483.8 640.4,484.2 641.1,483.6 C641.8,483.0 642.9,479.6 643.3,477.8 C643.7,476.0 645.1,467.1 645.5,465.4 C645.9,463.7 646.8,462.0 647.3,461.0 C647.8,460.0 650.1,457.1 650.8,455.7 C651.5,454.3 653.4,447.8 653.9,447.3 C654.4,446.8 655.4,450.4 656.1,450.4 C656.8,450.4 659.7,448.1 660.5,447.7 C661.3,447.3 663.4,446.8 664.1,446.4 C664.8,446.0 667.1,445.0 667.6,444.2 C668.1,443.4 668.9,438.9 669.4,438.0 C669.9,437.1 672.4,436.1 672.9,435.3 C673.4,434.5 674.1,430.2 674.5,430.1 C674.9,430.0 676.2,433.5 676.7,434.6 C677.2,435.7 679.5,440.5 680.0,440.7 C680.5,440.9 681.4,438.0 681.7,436.8 C682.0,435.6 683.1,428.9 683.4,429.0 C683.7,429.1 684.7,435.6 685.0,437.9 C685.3,440.2 686.0,450.2 686.2,452.4 C686.4,454.6 686.5,460.2 686.7,460.2 C686.9,460.2 688.0,454.1 688.4,452.4 C688.8,450.7 690.2,444.7 690.6,443.5 C691.0,442.3 691.9,440.1 692.3,440.2 C692.7,440.3 694.1,444.5 694.5,444.6 C694.9,444.7 695.8,441.7 696.2,441.3 C696.7,440.9 698.5,439.2 699.0,440.2 C699.5,441.2 700.8,449.4 701.2,451.3 C701.6,453.2 702.8,458.5 703.4,459.1 C704.0,459.7 706.1,457.7 706.8,456.9 C707.5,456.1 709.5,452.4 710.1,451.3 C710.7,450.2 712.4,447.5 712.9,445.7 C713.4,443.9 714.6,435.6 715.1,433.5 C715.6,431.4 717.3,425.7 717.9,424.6 C718.5,423.5 720.7,422.1 721.3,422.3 C721.9,422.5 723.0,425.9 723.5,426.8 C724.0,427.7 725.7,431.3 726.3,431.3 C726.9,431.3 728.6,427.8 729.1,426.8 C729.6,425.8 730.9,422.9 731.3,421.2 C731.7,419.5 732.7,411.4 733.0,410.1 C733.3,408.8 733.8,408.5 734.1,408.4 C734.4,408.3 735.9,409.8 736.3,409.5 C736.7,409.2 737.5,406.2 738.0,405.6 C738.5,405.0 740.5,403.9 741.3,403.4 C742.1,402.9 745.5,400.3 746.3,400.6 C747.1,400.9 748.5,406.9 749.1,406.3 C749.7,405.7 751.9,395.3 752.5,394.7 C753.1,394.1 754.7,400.5 755.2,400.2 C755.7,399.9 757.4,390.7 757.9,391.3 C758.4,391.9 759.5,405.1 760.0,406.3 C760.5,407.5 762.6,404.4 763.4,403.6 C764.1,402.9 766.8,399.0 767.5,398.8 C768.2,398.6 769.7,399.2 770.2,401.6 C770.7,404.0 771.9,419.8 772.2,422.7 C772.5,425.6 773.3,430.2 773.6,430.8 C773.9,431.4 775.3,427.0 775.6,428.8 C775.9,430.6 776.7,445.6 777.0,448.5 C777.3,451.4 778.1,458.9 778.4,458.1 C778.7,457.3 780.0,443.1 780.4,440.4 C780.8,437.7 781.9,430.1 782.4,430.8 C782.9,431.5 784.6,445.6 785.2,447.8 C785.8,450.0 787.9,451.9 788.6,452.6 C789.4,453.4 792.0,453.8 792.7,455.3 C793.5,456.8 795.6,465.3 796.1,467.6 C796.6,469.9 797.1,478.5 797.4,478.5 C797.7,478.5 799.1,469.7 799.5,467.6 C799.9,465.5 801.1,458.2 801.5,457.4 C801.9,456.6 803.1,461.6 803.6,459.4 C804.1,457.1 806.2,437.6 807.0,434.9 C807.8,432.2 811.0,434.1 811.7,432.2 C812.4,430.3 813.8,418.4 814.4,415.8 C815.0,413.2 817.1,408.6 817.9,406.3 C818.6,404.0 821.2,394.3 821.9,392.7 C822.6,391.1 823.9,390.3 824.7,390.0 C825.5,389.7 829.3,389.3 830.1,389.3 C830.9,389.3 832.7,389.9 833.0,390.0" fill="none" stroke="#0070c0" stroke-width="2.0" stroke-linejoin="round" stroke-linecap="butt" stroke-dasharray="5.75 2.25"/>
<path d="M92.7,665.6 C93.2,665.3 96.7,662.8 97.8,662.5 C98.9,662.2 103.0,662.7 104.0,662.5 C105.0,662.3 106.9,660.8 107.8,660.9 C108.7,661.0 112.3,662.8 113.3,663.3 C114.3,663.8 117.1,666.3 117.9,666.4 C118.7,666.5 120.2,664.5 121.0,664.0 C121.8,663.5 124.6,661.4 125.7,661.3 C126.8,661.1 130.8,662.5 131.9,662.5 C133.0,662.5 135.3,661.7 136.5,661.7 C137.7,661.7 142.9,662.2 144.3,662.1 C145.7,662.0 149.3,660.5 150.5,660.2 C151.7,659.9 155.8,659.6 156.7,659.4 C157.6,659.2 159.0,658.8 160.0,658.3 C161.0,657.8 165.9,654.5 167.1,654.3 C168.2,654.1 170.4,656.6 171.5,656.5 C172.6,656.4 176.5,653.8 177.7,653.4 C178.9,653.0 182.7,653.0 183.9,653.0 C185.1,653.0 188.9,653.7 190.1,653.4 C191.2,653.1 194.3,650.4 195.4,649.9 C196.5,649.4 199.6,648.7 200.7,648.1 C201.8,647.5 205.1,644.6 206.1,644.1 C207.1,643.6 209.6,642.8 210.5,642.8 C211.4,642.8 213.9,644.0 214.9,643.7 C215.9,643.4 219.1,640.9 220.2,640.1 C221.3,639.3 224.6,636.5 225.5,636.1 C226.4,635.7 228.4,635.5 229.1,635.7 C229.8,635.9 232.0,638.2 232.6,637.9 C233.2,637.6 234.7,633.3 235.3,633.0 C235.9,632.7 237.7,635.3 238.5,635.3 C239.3,635.3 242.0,632.8 243.0,633.1 C244.0,633.5 247.3,638.7 248.3,638.8 C249.3,638.9 251.6,634.9 252.7,634.0 C253.8,633.1 257.8,630.4 258.9,630.0 C260.0,629.6 263.1,630.0 264.2,630.0 C265.3,630.0 269.3,631.1 270.4,630.4 C271.5,629.7 273.8,624.3 274.9,623.3 C276.0,622.3 280.0,620.7 281.1,620.2 C282.2,619.7 285.3,618.8 286.4,618.0 C287.5,617.2 290.6,613.7 291.7,612.7 C292.8,611.7 295.9,608.7 297.0,608.3 C298.1,607.9 301.3,608.5 302.3,608.3 C303.3,608.1 306.0,606.4 306.7,606.5 C307.4,606.6 308.4,609.5 309.4,609.2 C310.4,609.0 315.8,604.7 316.8,604.0 C317.8,603.3 318.7,601.8 319.4,601.8 C320.1,601.8 323.1,603.4 323.9,604.0 C324.7,604.6 326.5,607.2 327.4,608.0 C328.3,608.8 331.6,611.9 332.7,612.0 C333.8,612.1 337.1,608.6 338.0,608.9 C338.9,609.2 340.8,614.5 341.6,614.7 C342.4,614.9 345.1,610.8 346.0,610.7 C346.9,610.6 349.6,613.7 350.4,613.8 C351.2,613.9 353.2,612.3 354.0,611.6 C354.8,610.9 357.5,607.5 358.4,607.1 C359.3,606.7 362.0,608.1 362.8,608.0 C363.6,607.9 365.8,606.8 366.4,606.3 C367.0,605.8 368.4,603.0 369.0,602.7 C369.6,602.4 371.8,603.3 372.6,603.6 C373.4,603.9 376.0,605.9 377.0,605.8 C378.0,605.7 381.2,603.2 382.3,602.7 C383.4,602.2 387.4,601.1 388.5,600.9 C389.6,600.7 392.1,600.2 393.0,600.9 C393.9,601.5 396.2,606.8 397.4,607.4 C398.6,608.0 403.9,606.7 405.0,606.5 C406.1,606.3 407.3,605.6 408.1,605.3 C408.9,605.0 411.9,603.9 413.0,603.4 C414.1,602.9 417.7,600.7 418.6,600.3 C419.5,599.9 421.4,599.6 422.3,599.1 C423.2,598.6 426.7,596.1 427.9,595.4 C429.1,594.7 433.1,592.1 434.1,592.3 C435.2,592.5 437.5,596.8 438.4,597.2 C439.3,597.6 442.7,596.2 443.4,596.0 C444.1,595.8 444.4,596.0 445.0,595.5 C445.6,595.0 448.5,591.1 449.4,591.1 C450.3,591.1 453.2,595.2 453.9,595.5 C454.6,595.8 456.0,594.7 456.5,593.8 C457.0,592.9 458.5,587.5 459.2,586.7 C459.9,585.9 462.7,586.0 463.6,585.8 C464.5,585.6 467.2,585.3 468.0,584.9 C468.8,584.5 470.7,582.4 471.6,581.8 C472.5,581.2 475.8,579.6 476.9,579.2 C478.0,578.8 481.3,578.0 482.2,577.8 C483.1,577.6 484.8,577.2 485.7,576.9 C486.6,576.6 489.7,575.0 491.1,574.7 C492.5,574.4 498.7,573.7 499.9,573.8 C501.1,573.9 502.8,575.6 503.5,576.1 C504.2,576.6 506.2,579.3 507.0,579.2 C507.8,579.1 510.2,574.6 511.0,574.7 C511.8,574.8 514.2,579.3 515.0,580.0 C515.8,580.7 518.6,581.3 519.4,581.4 C520.2,581.5 522.7,580.9 523.4,581.4 C524.1,581.9 526.2,586.1 526.8,586.9 C527.4,587.7 528.6,588.9 529.3,589.4 C530.0,589.9 533.0,591.8 533.8,591.9 C534.5,592.0 536.1,590.9 536.8,590.9 C537.5,590.9 540.0,592.6 540.8,592.4 C541.6,592.2 544.0,589.4 544.8,588.9 C545.6,588.4 548.0,587.9 548.8,587.9 C549.6,587.9 551.9,589.4 552.8,589.4 C553.7,589.4 557.0,588.5 557.8,588.4 C558.6,588.2 560.2,587.7 561.2,587.9 C562.2,588.1 566.1,590.3 567.3,590.0 C568.5,589.7 572.2,585.9 573.3,584.8 C574.4,583.7 577.6,579.5 578.6,579.0 C579.6,578.5 582.6,579.4 583.6,579.7 C584.6,580.0 587.7,582.0 588.7,581.9 C589.7,581.8 592.8,578.9 593.7,578.3 C594.6,577.6 596.9,575.8 598.0,575.4 C599.1,575.0 603.5,574.3 604.5,574.7 C605.5,575.1 607.2,578.6 608.1,579.0 C609.0,579.4 612.6,579.3 613.9,579.0 C615.2,578.7 619.7,576.2 621.1,575.9 C622.5,575.6 627.1,576.1 628.3,576.1 C629.4,576.1 631.7,575.8 632.6,576.1 C633.5,576.4 635.9,578.8 636.9,579.0 C637.9,579.2 641.6,578.6 642.7,578.3 C643.9,578.0 647.4,576.8 648.4,576.1 C649.4,575.5 651.6,572.4 652.7,571.8 C653.9,571.2 658.7,570.5 659.9,570.4 C661.1,570.3 664.1,570.0 665.0,570.4 C665.9,570.8 668.4,573.9 669.3,574.0 C670.2,574.1 673.3,571.4 674.3,571.5 C675.3,571.6 678.2,575.1 679.4,575.4 C680.6,575.6 684.9,574.1 685.9,574.0 C686.9,573.9 688.7,575.0 689.5,574.7 C690.3,574.4 692.9,571.6 693.8,571.1 C694.7,570.6 697.6,570.0 698.8,569.7 C700.0,569.4 704.0,568.3 705.4,568.5 C706.8,568.7 711.2,571.5 712.4,571.6 C713.6,571.7 716.2,569.3 717.1,569.3 C718.0,569.3 720.0,571.8 720.9,571.6 C721.8,571.4 724.4,567.6 725.6,566.9 C726.8,566.2 732.0,565.0 733.3,564.6 C734.6,564.2 737.6,563.2 738.8,563.1 C740.0,563.0 744.1,563.0 745.0,563.1 C745.9,563.2 747.3,564.9 748.1,564.6 C748.9,564.3 751.5,560.6 752.7,560.0 C753.9,559.4 758.3,558.2 759.7,558.4 C761.1,558.5 765.4,561.2 766.7,561.5 C768.0,561.8 771.8,561.7 772.9,561.5 C774.0,561.3 776.6,559.2 777.5,559.2 C778.4,559.2 781.1,561.6 782.2,561.5 C783.3,561.4 787.3,559.2 788.4,558.4 C789.5,557.5 791.8,553.8 793.0,553.0 C794.2,552.2 798.8,551.2 800.0,550.7 C801.2,550.2 804.2,548.2 805.4,547.6 C806.6,547.0 810.6,545.2 811.6,544.5 C812.6,543.8 814.4,541.0 815.5,540.6 C816.6,540.2 821.0,541.5 822.5,540.6 C824.0,539.7 829.2,532.5 830.2,531.3 C831.2,530.1 832.7,529.2 833.0,529.0" fill="none" stroke="#604a7b" stroke-width="2.0" stroke-linejoin="round" stroke-linecap="butt" stroke-dasharray="5.75 2.25"/>
<path d="M92.5,664.3 C95.2,663.9 114.2,661.4 119.9,660.8 C125.6,660.2 143.8,658.9 149.8,658.4 C155.8,657.9 172.2,656.0 179.7,655.4 C187.2,654.8 215.6,653.0 224.6,652.4 C233.6,651.8 260.4,649.9 269.4,649.4 C278.4,648.9 306.2,647.4 314.3,647.0 C322.4,646.6 343.1,645.7 350.0,645.4 C356.9,645.1 376.6,644.1 383.2,643.8 C389.8,643.5 410.0,642.8 416.4,642.7 C422.8,642.6 440.5,643.4 446.9,643.2 C453.3,643.0 473.2,641.0 480.1,640.5 C487.0,640.0 509.2,638.2 516.1,637.7 C523.0,637.2 543.2,636.3 549.3,636.0 C555.4,635.7 571.9,634.6 577.0,634.4 C582.1,634.1 593.2,633.9 600.0,633.5 C606.8,633.1 635.3,631.1 645.4,630.5 C655.5,629.9 689.6,628.3 700.7,627.7 C711.8,627.1 742.9,625.2 756.1,624.4 C769.3,623.6 825.3,620.4 833.0,620.0" fill="none" stroke="#e46c0a" stroke-width="2.0" stroke-linejoin="round" stroke-linecap="butt" stroke-dasharray="5.75 2.25"/>
<defs><filter id="sh" x="-10%" y="-10%" width="120%" height="130%"><feGaussianBlur stdDeviation="2"/></filter></defs>
<rect x="132" y="238.5" width="310" height="98" fill="#000" opacity="0.25" filter="url(#sh)"/>
<rect x="136.5" y="240.5" width="309" height="94" fill="#fff" stroke="#000" stroke-width="1"/>
<line x1="147" y1="253" x2="183" y2="253" stroke="#003300" stroke-width="2.25"/>
<text x="191.5" y="256.7" font-family="'Liberation Sans', sans-serif" font-size="11" font-weight="normal" font-style="normal" fill="#000" text-anchor="start" textLength="146.6" lengthAdjust="spacingAndGlyphs" >The Dual Momentum Fund</text>
<line x1="147" y1="276" x2="183" y2="276" stroke="#0070c0" stroke-width="2.25" stroke-dasharray="6 2"/>
<text x="191.5" y="279.7" font-family="'Liberation Sans', sans-serif" font-size="11" font-weight="normal" font-style="normal" fill="#000" text-anchor="start" textLength="184.4" lengthAdjust="spacingAndGlyphs" >All Ordinaries Accumulation Index</text>
<line x1="147" y1="299" x2="183" y2="299" stroke="#604a7b" stroke-width="2.25" stroke-dasharray="6 2"/>
<text x="191.5" y="302.7" font-family="'Liberation Sans', sans-serif" font-size="11" font-weight="normal" font-style="normal" fill="#000" text-anchor="start" textLength="245" lengthAdjust="spacingAndGlyphs" >Fixed Interest (S&amp;P Aust Fixed Interest Index)</text>
<line x1="147" y1="322" x2="183" y2="322" stroke="#e46c0a" stroke-width="2.25" stroke-dasharray="6 2"/>
<text x="191.5" y="326.7" font-family="'Liberation Sans', sans-serif" font-size="11" font-weight="normal" font-style="normal" fill="#000" text-anchor="start" textLength="16.8" lengthAdjust="spacingAndGlyphs" >CPI</text>
<text x="844" y="320" font-family="'Liberation Sans', sans-serif" font-size="11" font-weight="normal" font-style="normal" fill="#000" text-anchor="start" textLength="45" lengthAdjust="spacingAndGlyphs" >$93,543</text>
<text x="844" y="396.7" font-family="'Liberation Sans', sans-serif" font-size="11" font-weight="normal" font-style="normal" fill="#000" text-anchor="start" textLength="45" lengthAdjust="spacingAndGlyphs" >$83,997</text>
<text x="844" y="534.5" font-family="'Liberation Sans', sans-serif" font-size="11" font-weight="normal" font-style="normal" fill="#000" text-anchor="start" textLength="45" lengthAdjust="spacingAndGlyphs" >$66,834</text>
<text x="844" y="624.8" font-family="'Liberation Sans', sans-serif" font-size="11" font-weight="normal" font-style="normal" fill="#000" text-anchor="start" textLength="45" lengthAdjust="spacingAndGlyphs" >$55,562</text>
<text x="146.5" y="782" font-family="'Liberation Sans', sans-serif" font-size="13" font-weight="bold" font-style="italic" fill="#000" text-anchor="start" textLength="97.5" lengthAdjust="spacingAndGlyphs" >Value of $50,000</text>
<text x="252.3" y="782" font-family="'Liberation Sans', sans-serif" font-size="13" font-weight="bold" font-style="italic" fill="#000" text-anchor="start" textLength="240.5" lengthAdjust="spacingAndGlyphs" >invested since inception (net of all fees).</text>
<text x="508" y="782" font-family="'Liberation Sans', sans-serif" font-size="13" font-weight="bold" font-style="italic" fill="#000" text-anchor="start" textLength="222.5" lengthAdjust="spacingAndGlyphs" >Assumes distributions are reinvested</text>
</svg></body></html>
